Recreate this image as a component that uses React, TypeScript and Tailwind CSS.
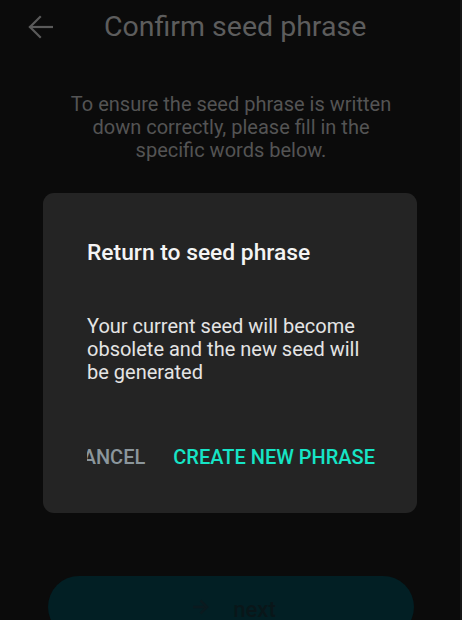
export default function App() {
  return (
    <div className="relative w-[462px] h-[620px] overflow-hidden bg-[#0b0b0b] font-['Roboto',sans-serif] flex flex-col">
      {/* Header */}
      <div className="flex items-center h-[54px] pl-[28px] shrink-0">
        <svg width="25" height="24" viewBox="0 0 25 24" fill="none" stroke="#5a5a5a" strokeWidth="2.2" strokeLinecap="square">
          <path d="M2 12H24" />
          <path d="M12 2L2 12L12 22" />
        </svg>
        <h1 className="ml-[51px] text-[28.5px] leading-[32px] text-[#5d5d5d]">Confirm seed phrase</h1>
      </div>

      <p className="mt-[39px] px-[62px] text-center text-[20px] leading-[23px] text-[#545454]">
        To ensure the seed phrase is written down correctly, please fill in the specific words below.
      </p>

      <div className="flex-1" />

      {/* Next button */}
      <div className="px-[48px] shrink-0 mb-[-18px]">
        <div className="h-[62px] rounded-full bg-[#021f24] flex items-center justify-center gap-[24px] pl-[6px]">
          <svg width="17" height="16" viewBox="0 0 17 16" fill="none" stroke="#0a1a1f" strokeWidth="2.6">
            <path d="M1 8H15" />
            <path d="M8.5 1.5L15 8L8.5 14.5" />
          </svg>
          <span className="text-[22px] font-medium text-[#091619] mt-[4px]">next</span>
        </div>
      </div>

      {/* Dialog */}
      <div className="absolute left-[43px] top-[193px] w-[374px] h-[320px] rounded-[11px] bg-[#242424] pl-[44px] pr-[42px] pt-[46px]">
        <h2 className="text-[22.8px] leading-[28px] font-medium text-[#f4f4f4]">Return to seed phrase</h2>
        <p className="mt-[48px] text-[20px] leading-[23px] text-[#e4e4e4]">
          Your current seed will become obsolete and the new seed will be generated
        </p>
        <div className="mt-[61px] flex justify-end items-center gap-[28px] overflow-hidden whitespace-nowrap">
          <span className="text-[20px] leading-[24px] font-medium text-[#8b969c]">CANCEL</span>
          <span className="text-[20px] leading-[24px] font-medium text-[#16e4c6]">CREATE NEW PHRASE</span>
        </div>
      </div>

      <div className="absolute right-0 top-0 w-[2px] h-full bg-[#161616]" />
    </div>
  );
}
